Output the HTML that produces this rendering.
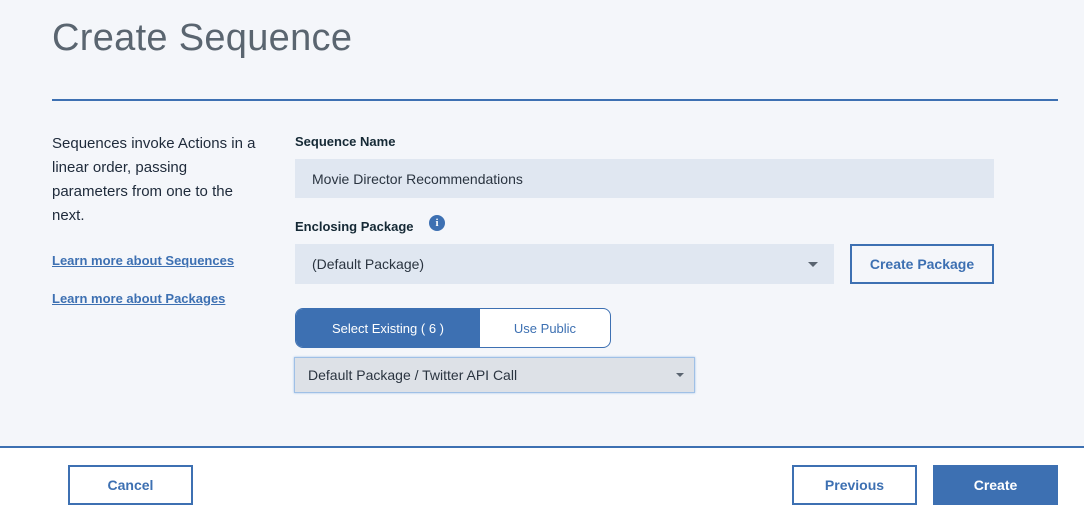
<!DOCTYPE html>
<html><head><style>
*{box-sizing:border-box;margin:0;padding:0}
body{width:1084px;height:520px;background:#f4f6fa;font-family:"Liberation Sans",sans-serif;position:relative;overflow:hidden;color:#1e2a3a}
.a{position:absolute}
h1{position:absolute;left:52px;top:17px;font-weight:300;font-size:38px;color:#5a6570;letter-spacing:0.3px}
.rule{left:52px;top:99px;width:1006px;height:2px;background:#3d70b2}
.desc{left:52px;top:132px;font-size:15px;line-height:24px;color:#1e2a3a;white-space:nowrap}
.lnk{left:52px;font-size:13px;color:#3d70b2;text-decoration:underline;font-weight:bold}
.lbl{left:295px;font-size:13px;font-weight:bold;color:#152935}
.inp{background:#e0e7f1;font-size:14px;color:#2a3440;padding-left:17px;display:flex;align-items:center}
.btn{border:2px solid #3d70b2;color:#3d70b2;font-weight:bold;font-size:14px;display:flex;align-items:center;justify-content:center;background:#fff}
.caret{position:absolute;width:0;height:0;border-left:5px solid transparent;border-right:5px solid transparent;border-top:5px solid #5a6470}
</style></head><body>
<h1>Create Sequence</h1>
<div class="a rule"></div>
<div class="a desc">Sequences invoke Actions in a<br>linear order, passing<br>parameters from one to the<br>next.</div>
<div class="a lnk" style="top:253px">Learn more about Sequences</div>
<div class="a lnk" style="top:291px">Learn more about Packages</div>
<div class="a lbl" style="top:134px">Sequence Name</div>
<div class="a inp" style="left:295px;top:159px;width:699px;height:39px">Movie Director Recommendations</div>
<div class="a lbl" style="top:219px">Enclosing Package</div>
<div class="a" style="left:429px;top:215px;width:16px;height:16px;border-radius:50%;background:#3d70b2;color:#fff;font-size:11px;font-weight:bold;text-align:center;line-height:16px;font-family:'Liberation Serif',serif">i</div>
<div class="a inp" style="left:295px;top:244px;width:539px;height:40px">(Default Package)<span class="caret" style="left:513px;top:18px"></span></div>
<div class="a btn" style="left:850px;top:244px;width:144px;height:40px;background:transparent">Create Package</div>
<div class="a" style="left:295px;top:308px;width:316px;height:40px;border:1px solid #3d70b2;border-radius:8px;background:#fff;overflow:hidden;display:flex;font-size:13px">
<div style="width:184px;background:#3d70b2;color:#fff;display:flex;align-items:center;justify-content:center">Select Existing ( 6 )</div>
<div style="flex:1;color:#3d70b2;display:flex;align-items:center;justify-content:center">Use Public</div></div>
<div class="a" style="left:294px;top:357px;width:401px;height:36px;background:#dde1e7;border:1px solid #9fc0e6;box-shadow:0 0 2px #9fc0e6;font-size:14px;color:#2a3440;padding-left:13px;display:flex;align-items:center">Default Package / Twitter API Call<span class="caret" style="left:381px;top:15px;border-width:4px 4px 0 4px"></span></div>
<div class="a" style="left:0;top:446px;width:1084px;height:74px;background:#fff;border-top:2px solid #3d70b2"></div>
<div class="a btn" style="left:68px;top:465px;width:125px;height:40px">Cancel</div>
<div class="a btn" style="left:792px;top:465px;width:125px;height:40px">Previous</div>
<div class="a btn" style="left:933px;top:465px;width:125px;height:40px;background:#3d70b2;color:#fff;border-color:#3d70b2">Create</div>
</body></html>
